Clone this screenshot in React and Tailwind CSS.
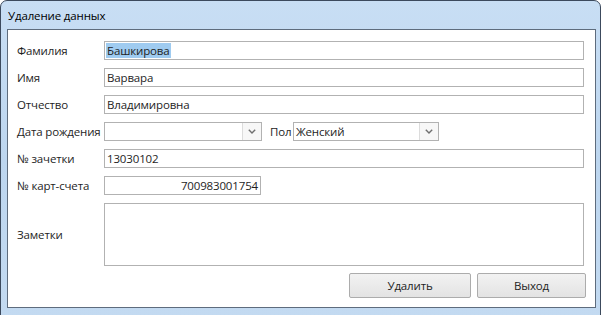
import React from "react";

function Chevron() {
  return (
    <svg width="8" height="5" viewBox="0 0 8 5" className="block">
      <polyline
        points="0.8,0.8 4,4 7.2,0.8"
        fill="none"
        stroke="#6f6f6f"
        strokeWidth="1.4"
      />
    </svg>
  );
}

function Field({ label, children }) {
  return (
    <div className="flex items-center h-[19px]">
      <span className="w-[87px] shrink-0 whitespace-nowrap">{label}</span>
      {children}
    </div>
  );
}

function TextBox({ value, className = "w-[480px]", right = false }) {
  return (
    <div
      className={`${className} h-[19px] border border-[#b2b2b2] bg-white flex items-center px-[2px] ${
        right ? "justify-end" : ""
      }`}
    >
      {value}
    </div>
  );
}

function Combo({ value, className }) {
  return (
    <div
      className={`${className} h-[19px] border border-[#b2b2b2] bg-white flex items-center`}
    >
      <span className="flex-1 pl-[2px]">{value}</span>
      <div className="w-[19px] h-full border-l border-[#dcdcdc] bg-[#f7f7f7] flex items-center justify-center">
        <Chevron />
      </div>
    </div>
  );
}

export default function App() {
  return (
    <div className="w-[603px] h-[315px] bg-white overflow-hidden font-['Open_Sans',sans-serif] text-[11.5px] tracking-[-0.15px] text-[#1e1e1e] leading-none">
      <div className="w-[601px] h-[320px] rounded-t-[7px] border border-[#3c4a5d] bg-gradient-to-b from-[#c8def4] via-[#bdd6ef] to-[#c3daf1] flex flex-col">
        {/* title bar */}
        <div className="h-[28px] flex items-center pl-[7px] pt-[2px] text-black">
          Удаление данных
        </div>

        {/* client area */}
        <div className="ml-[6px] w-[589px] h-[279px] border border-[#5e6c7d] bg-white pt-[11px] pl-[9px] flex flex-col">
          <div className="flex flex-col gap-[8px]">
            <Field label="Фамилия">
              <div className="w-[480px] h-[19px] border border-[#b2b2b2] bg-white flex items-center px-[1px]">
                <span className="bg-[#9fcbf0] px-[1px] py-[2px]">Башкирова</span>
              </div>
            </Field>
            <Field label="Имя">
              <TextBox value="Варвара" />
            </Field>
            <Field label="Отчество">
              <TextBox value="Владимировна" />
            </Field>
            <Field label="Дата рождения">
              <Combo value="" className="w-[158px]" />
              <span className="ml-[8px] w-[23px]">Пол</span>
              <Combo value="Женский" className="w-[146px]" />
            </Field>
            <Field label="№ зачетки">
              <TextBox value="13030102" />
            </Field>
            <Field label="№ карт-счета">
              <TextBox value="700983001754" className="w-[157px]" right />
            </Field>
            <div className="flex items-center h-[63px]">
              <span className="w-[87px] shrink-0">Заметки</span>
              <div className="w-[480px] h-[63px] border border-[#b2b2b2] bg-white" />
            </div>
          </div>

          {/* buttons */}
          <div className="mt-[7px] flex justify-end gap-[6px] pr-[9px]">
            <button className="w-[122px] h-[25px] rounded-[2px] border border-[#acacac] bg-gradient-to-b from-[#f2f2f2] to-[#e3e3e3] text-[#1e1e1e]">
              Удалить
            </button>
            <button className="w-[109px] h-[25px] rounded-[2px] border border-[#acacac] bg-gradient-to-b from-[#f2f2f2] to-[#e3e3e3] text-[#1e1e1e]">
              Выход
            </button>
          </div>
        </div>
      </div>
    </div>
  );
}
